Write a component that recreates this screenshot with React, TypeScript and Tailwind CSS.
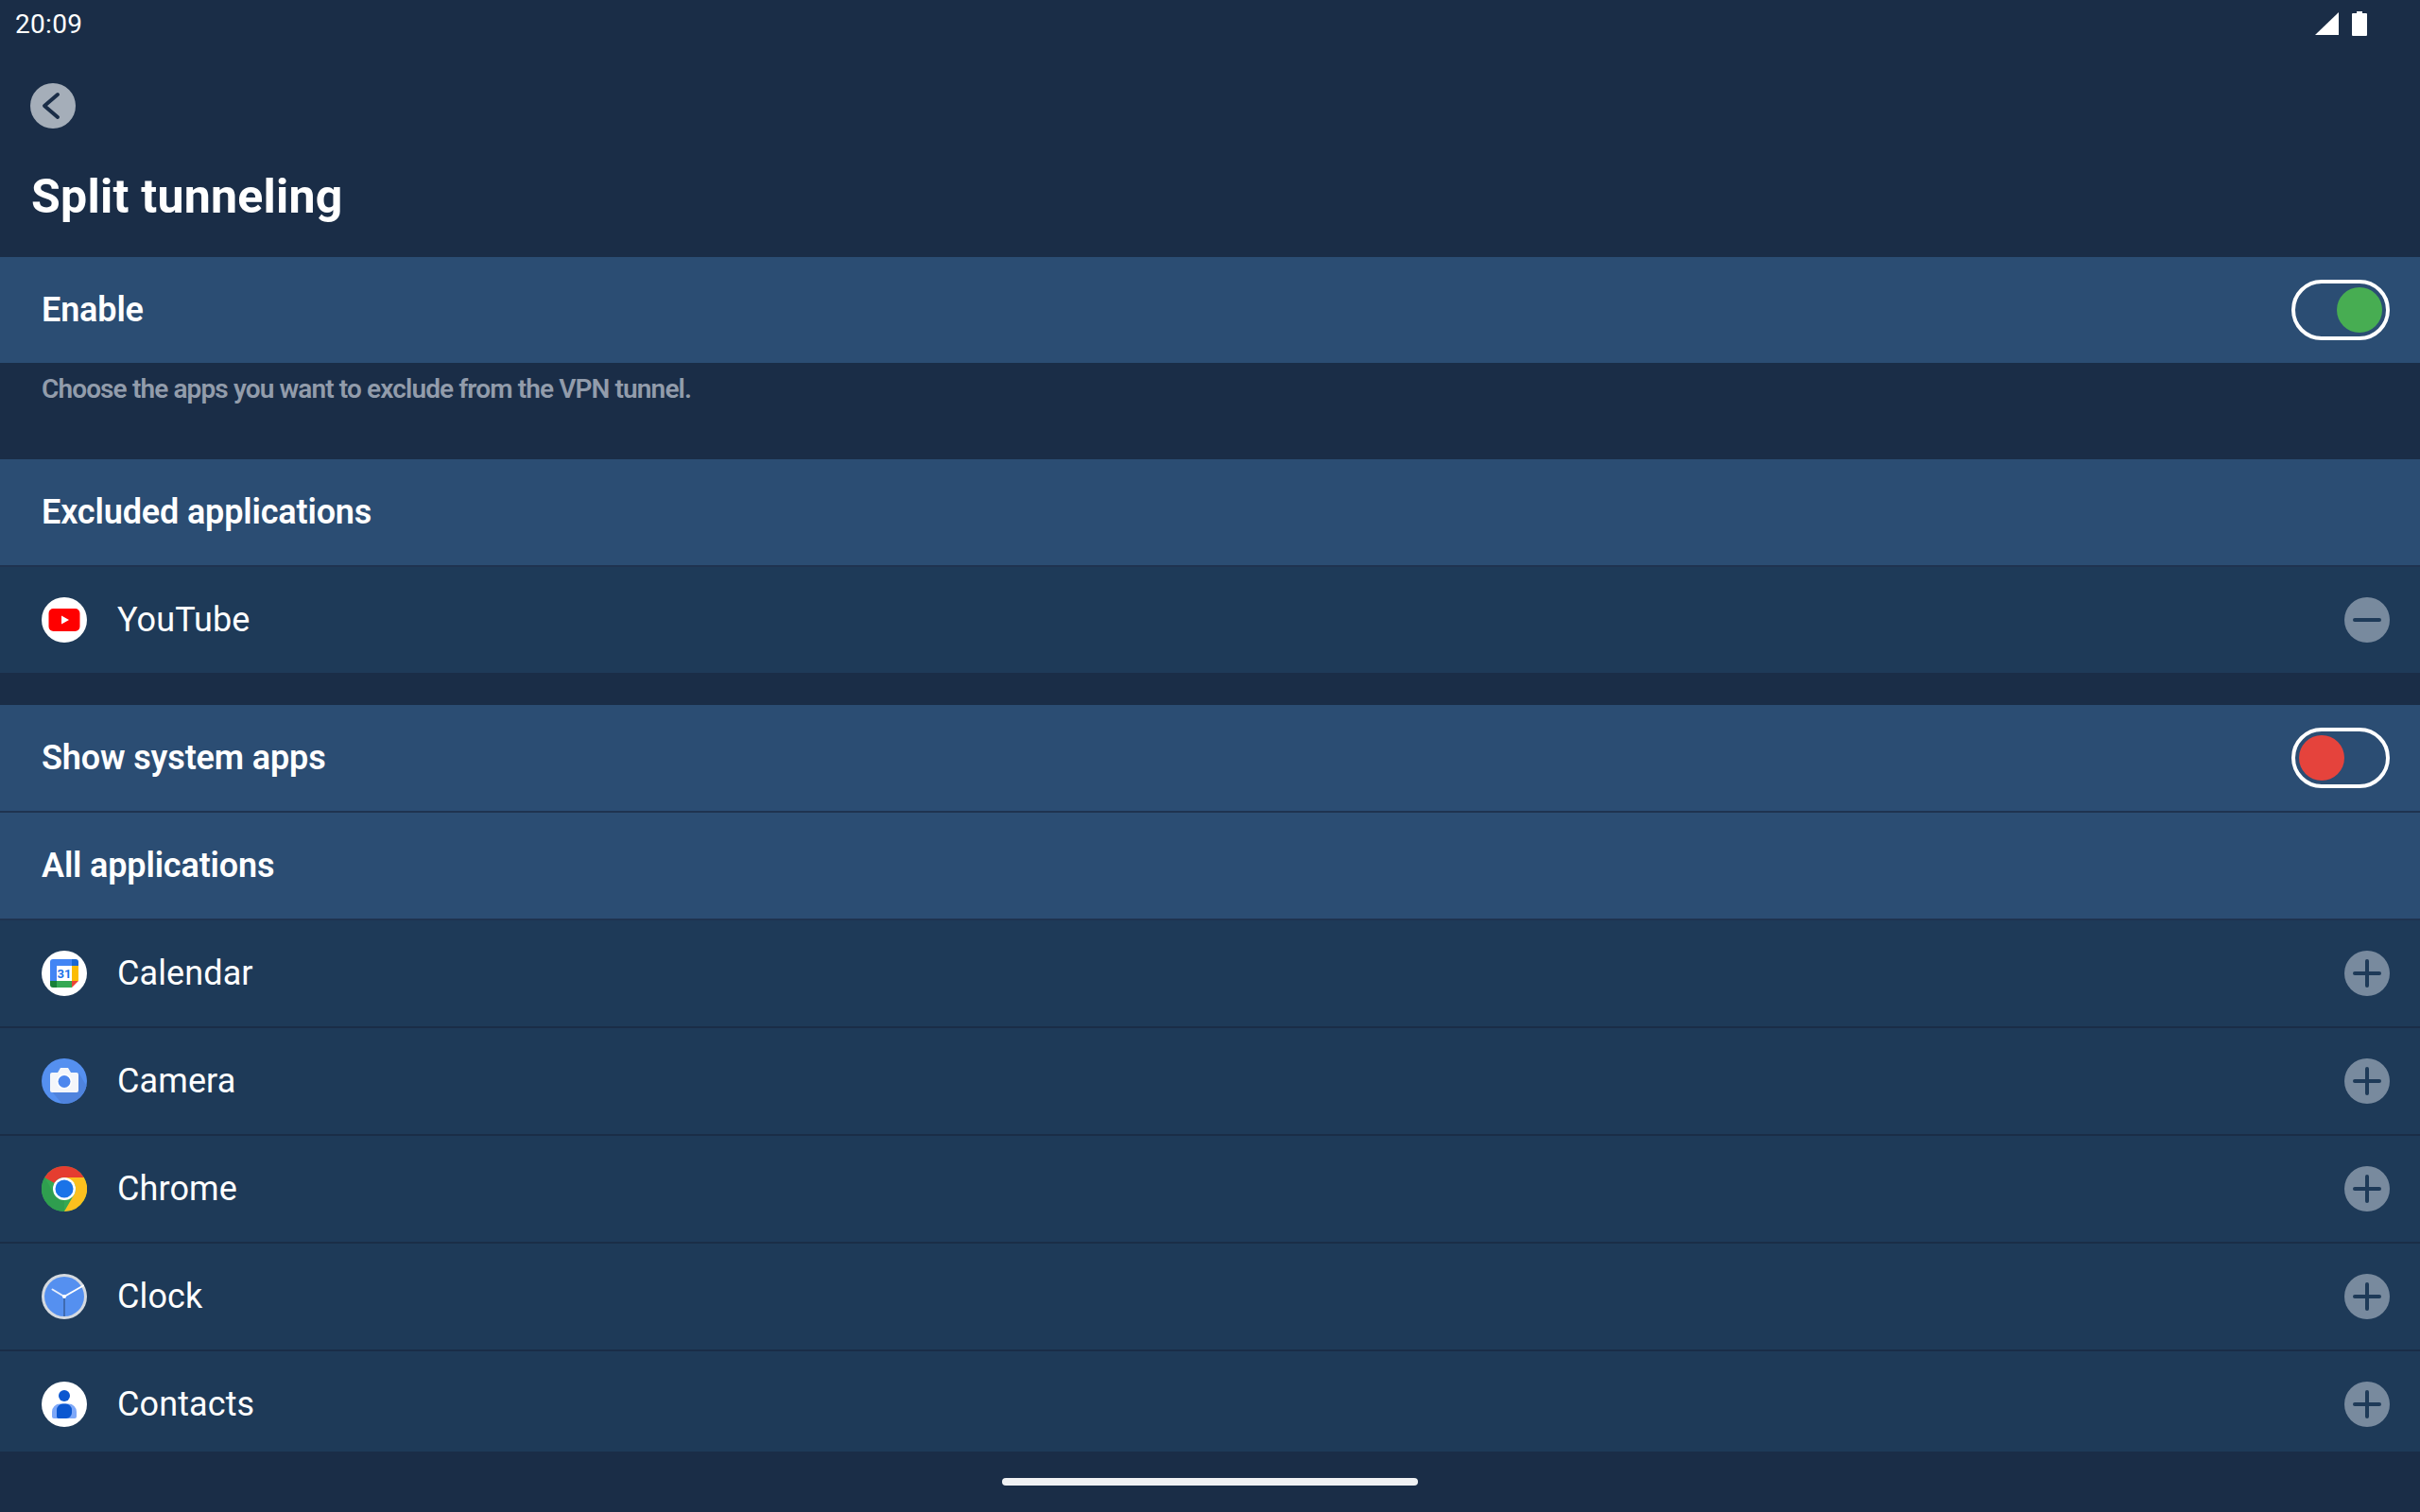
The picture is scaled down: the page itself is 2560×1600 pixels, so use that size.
import { ReactNode } from 'react';

const font = { fontFamily: 'Roboto, sans-serif' };

function Toggle({ on }: { on: boolean }) {
    return (
        <div className={`w-[104px] h-[64px] rounded-full border-4 border-white flex items-center px-1 ${on ? 'justify-end' : 'justify-start'}`}>
            <div className={`w-12 h-12 rounded-full ${on ? 'bg-[#47ad52]' : 'bg-[#e5433c]'}`} />
        </div>
    );
}

function HeaderRow({ title, children, border }: { title: string; children?: ReactNode; border?: boolean }) {
    return (
        <div className={`bg-[#2b4d73] flex items-center justify-between pl-[44px] pr-[32px] ${border ? 'h-[114px] border-b-2 border-[#1f3350]' : 'h-[112px]'}`}>
            <span className="text-[36px] font-semibold tracking-[-0.15px] text-white leading-none">{title}</span>
            {children}
        </div>
    );
}

function ActionIcon({ type }: { type: 'add' | 'remove' }) {
    return (
        <svg width="48" height="48" viewBox="0 0 48 48">
            <circle cx="24" cy="24" r="24" fill="#788a9e" />
            <path d="M11 24H37" stroke="#1e3a58" strokeWidth="4" strokeLinecap="round" />
            {type === 'add' && <path d="M24 11V37" stroke="#1e3a58" strokeWidth="4" strokeLinecap="round" />}
        </svg>
    );
}

function YouTubeIcon() {
    return (
        <svg width="48" height="48" viewBox="0 0 48 48">
            <circle cx="24" cy="24" r="24" fill="#fff" />
            <rect x="7.5" y="12" width="33" height="24" rx="5" fill="#ff0000" />
            <path d="M21 19.5L29 24L21 28.5Z" fill="#fff" />
        </svg>
    );
}

function CalendarIcon() {
    return (
        <svg width="48" height="48" viewBox="0 0 48 48">
            <circle cx="24" cy="24" r="24" fill="#fff" />
            <path d="M12 9H32V16H16V32H9V12A3 3 0 0 1 12 9Z" fill="#4285f4" />
            <path d="M32 9H36A3 3 0 0 1 39 12V16H32Z" fill="#1967d2" />
            <rect x="32" y="16" width="7" height="16" fill="#fbbc04" />
            <rect x="16" y="32" width="16" height="7" fill="#34a853" />
            <path d="M9 32H16V39H12A3 3 0 0 1 9 36Z" fill="#188038" />
            <path d="M32 32H39L32 39Z" fill="#ea4335" />
            <rect x="16" y="16" width="16" height="16" fill="#fff" />
            <text x="24" y="29" textAnchor="middle" fontSize="13" fontWeight="700" fill="#1a73e8" style={font}>31</text>
        </svg>
    );
}

function CameraIcon() {
    return (
        <svg width="48" height="48" viewBox="0 0 48 48">
            <circle cx="24" cy="24" r="24" fill="#5590f0" />
            <path d="M9 33L39 15L47.5 29A24 24 0 0 1 27 47.8L21 47Z" fill="#4f83dd" />
            <path d="M9 17A2 2 0 0 1 11 15H17L20 10H28L31 15H37A2 2 0 0 1 39 17V34A2 2 0 0 1 37 36H11A2 2 0 0 1 9 34Z" fill="#f4f6fa" />
            <circle cx="24" cy="24.5" r="8" fill="#fff" />
            <circle cx="24" cy="24.5" r="6.5" fill="#4d87ee" />
        </svg>
    );
}

function ChromeIcon() {
    return (
        <svg width="48" height="48" viewBox="0 0 48 48">
            <circle cx="24" cy="24" r="24" fill="#34a853" />
            <path d="M3.2 12A24 24 0 0 1 44.8 12H24A12 12 0 0 0 13.6 18Z" fill="#e53d30" />
            <path d="M44.8 12A24 24 0 0 1 24 48L34.4 30A12 12 0 0 0 34.4 18L24 12Z" fill="#fcc01e" />
            <path d="M3.2 12L13.6 30A12 12 0 0 0 24 36L24 48A24 24 0 0 1 3.2 12Z" fill="#2f9e4f" />
            <circle cx="24" cy="24" r="12" fill="#fff" />
            <circle cx="24" cy="24" r="9.5" fill="#1a73e8" />
        </svg>
    );
}

function ClockIcon() {
    return (
        <svg width="48" height="48" viewBox="0 0 48 48">
            <circle cx="24" cy="24" r="24" fill="#d5dae0" />
            <circle cx="24" cy="24" r="21" fill="#5590f0" />
            <path d="M24 24V45" stroke="#3f6bb0" strokeWidth="2" />
            <path d="M24 24L11.5 16.5" stroke="#e8eefb" strokeWidth="2" strokeLinecap="round" />
            <path d="M24 24L44 12.5" stroke="#fff" strokeWidth="2" strokeLinecap="round" />
            <circle cx="24" cy="24" r="2" fill="#fff" />
        </svg>
    );
}

function ContactsIcon() {
    return (
        <svg width="48" height="48" viewBox="0 0 48 48">
            <circle cx="24" cy="24" r="24" fill="#fff" />
            <circle cx="24" cy="15" r="6" fill="#0b57d0" />
            <path d="M11 37V32A8.5 8.5 0 0 1 19.5 23.5H28.5A8.5 8.5 0 0 1 37 32V37A2 2 0 0 1 35 39H13A2 2 0 0 1 11 37Z" fill="#7ea8f8" />
            <path d="M16 37V30A6.5 6.5 0 0 1 22.5 23.5H25.5A6.5 6.5 0 0 1 32 30V33A6 6 0 0 1 26 39H18A2 2 0 0 1 16 37Z" fill="#0b57d0" />
        </svg>
    );
}

function AppRow({ name, icon, action, border }: { name: string; icon: ReactNode; action: 'add' | 'remove'; border?: boolean }) {
    return (
        <div className={`bg-[#1e3a58] flex items-center pl-[44px] pr-[32px] shrink-0 ${border ? 'h-[114px] border-b-2 border-[#1a2d47]' : 'h-[112px]'}`}>
            <div className="w-12 h-12">{icon}</div>
            <span className="ml-[32px] flex-1 text-[36px] tracking-[0.1px] text-white leading-none">{name}</span>
            <ActionIcon type={action} />
        </div>
    );
}

export default function App() {
    return (
        <div className="w-[2560px] h-[1600px] bg-[#1a2d47] overflow-hidden flex flex-col" style={font}>
            {/* Status bar */}
            <div className="h-[50px] flex items-center justify-between pl-4 pr-[56px] shrink-0">
                <span className="text-[28px] tracking-[0.3px] text-white leading-none pt-px">20:09</span>
                <div className="flex items-center gap-[14px]">
                    <svg width="25" height="24" viewBox="0 0 25 24"><path d="M25 0V24H0Z" fill="#fff" /></svg>
                    <svg width="16" height="26" viewBox="0 0 16 26"><path d="M5 0H11V2H15A1 1 0 0 1 16 3V25A1 1 0 0 1 15 26H1A1 1 0 0 1 0 25V3A1 1 0 0 1 1 2H5Z" fill="#fff" /></svg>
                </div>
            </div>

            {/* Title */}
            <div className="h-[222px] shrink-0 pl-8 pt-[38px]">
                <svg width="48" height="48" viewBox="0 0 48 48">
                    <circle cx="24" cy="24" r="24" fill="#a5aeb9" />
                    <path d="M29 12L15 24L29 36" fill="none" stroke="#1a2d47" strokeWidth="4" strokeLinecap="round" strokeLinejoin="round" />
                </svg>
                <h1 className="ml-px mt-[44px] text-[50px] font-bold tracking-[0.25px] text-white leading-[56px]">Split tunneling</h1>
            </div>

            <HeaderRow title="Enable"><Toggle on /></HeaderRow>

            <div className="h-[102px] pl-[44px] pt-[10px] shrink-0">
                <p className="text-[28px] font-semibold tracking-[-0.88px] text-[#929cab] leading-[36px]">Choose the apps you want to exclude from the VPN tunnel.</p>
            </div>

            <HeaderRow title="Excluded applications" border />
            <AppRow name="YouTube" icon={<YouTubeIcon />} action="remove" />

            <div className="h-[34px] shrink-0" />

            <HeaderRow title="Show system apps" border><Toggle on={false} /></HeaderRow>
            <HeaderRow title="All applications" border />

            <div className="flex-1 min-h-0 overflow-hidden flex flex-col">
                <AppRow name="Calendar" icon={<CalendarIcon />} action="add" border />
                <AppRow name="Camera" icon={<CameraIcon />} action="add" border />
                <AppRow name="Chrome" icon={<ChromeIcon />} action="add" border />
                <AppRow name="Clock" icon={<ClockIcon />} action="add" border />
                <AppRow name="Contacts" icon={<ContactsIcon />} action="add" />
            </div>

            {/* Nav bar */}
            <div className="h-[64px] shrink-0 bg-[#1a2d47] flex justify-center pt-[28px] relative z-10">
                <div className="w-[440px] h-2 rounded-full bg-[#f0f1f3]" />
            </div>
        </div>
    );
}
